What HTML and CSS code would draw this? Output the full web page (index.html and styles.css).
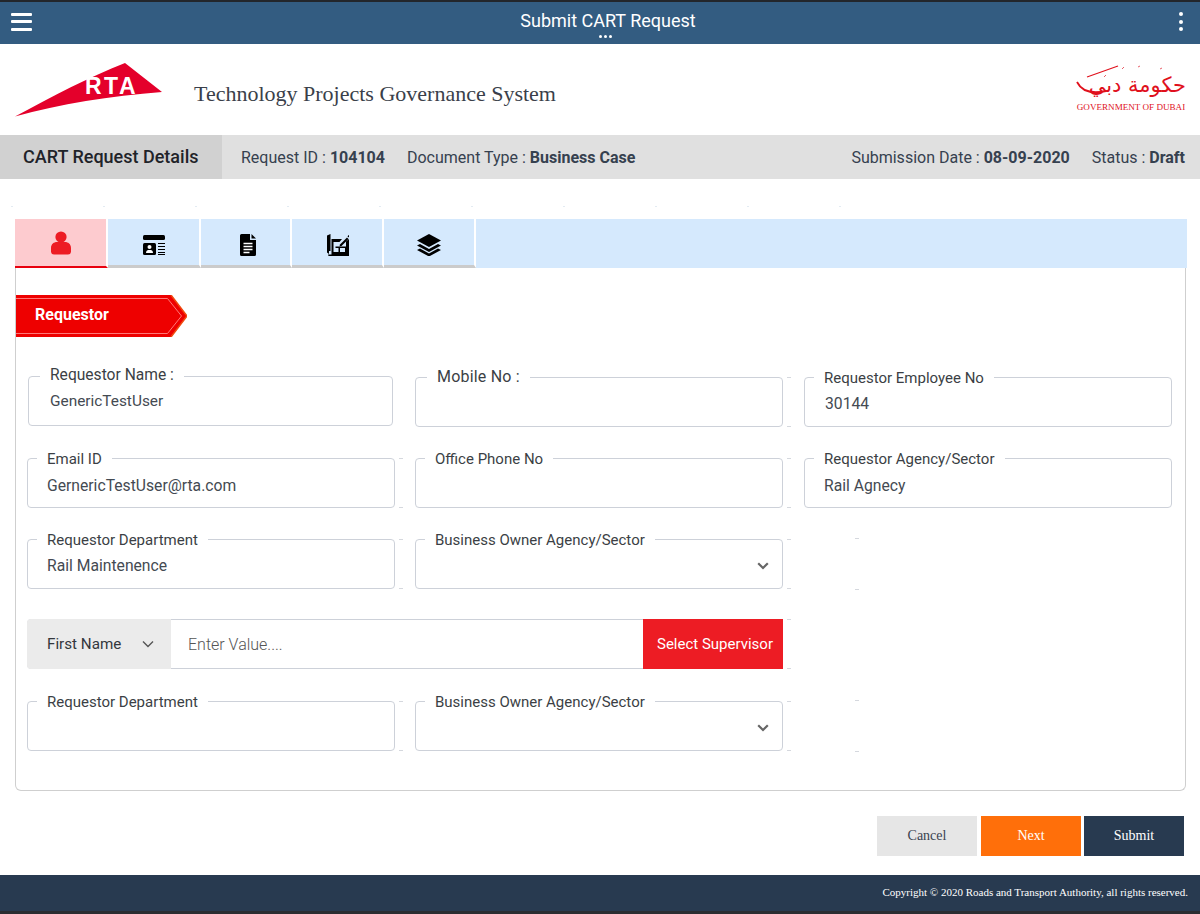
FILE: index.html
```html
<!DOCTYPE html>
<html lang="en">
<head>
<meta charset="utf-8">
<title>Submit CART Request</title>
<link rel="stylesheet" href="styles.css">
</head>
<body>
<header class="topbar">
  <button class="hamburger" aria-label="Menu"><span></span><span></span><span></span></button>
  <h1 class="page-title">Submit CART Request</h1>
  <div class="grip"><i></i><i></i><i></i></div>
  <button class="kebab" aria-label="More"><i></i><i></i><i></i></button>
</header>

<section class="brand">
  <div class="rta-logo">
    <svg viewBox="0 0 148 54" width="148" height="54" aria-hidden="true">
      <path d="M0 53.5C38 33 74 14 110 0L147 29C95 33 45 41 0 53.5Z" fill="#e4002b"/>
    </svg>
    <span class="rta-text">RTA</span>
  </div>
  <div class="system-name">Technology Projects Governance System</div>
  <div class="gov-logo">
    <svg class="gov-flourish" viewBox="0 0 110 36" width="110" height="36" aria-hidden="true">
      <path d="M1 17C6 27 16 29 30 26" fill="none" stroke="#e0101c" stroke-width="1.800"/>
      <path d="M11 12 42 1" fill="none" stroke="#e0101c" stroke-width="1.100"/>
      <path d="M28 12l2-2M46 4l2-2M62 2l2-1M84 4l2-1" fill="none" stroke="#e8606a" stroke-width="1"/>
    </svg>
    <div class="gov-arabic" lang="ar" dir="rtl">حكومة دبي</div>
    <div class="gov-latin">GOVERNMENT OF DUBAI</div>
  </div>
</section>

<section class="subbar">
  <div class="subbar-title">CART Request Details</div>
  <div class="meta-left">
    <span>Request ID : <b>104104</b></span>
    <span>Document Type : <b>Business Case</b></span>
  </div>
  <div class="meta-right">
    <span>Submission Date : <b>08-09-2020</b></span>
    <span>Status : <b>Draft</b></span>
  </div>
</section>

<div class="ticks"></div>

<main class="content">
  <nav class="tabs">
    <a class="tab tab-active">
      <svg viewBox="0 0 20 24" width="20" height="24" aria-hidden="true"><circle cx="10" cy="6" r="5.600" fill="#ed1c24"/><path d="M3 23.500a3 3 0 0 1-3-2.500v-4c0-4 3-6 6-6h8c3 0 6 2 6 6v4a3 3 0 0 1-3 2.500Z" fill="#ed1c24"/></svg>
    </a>
    <a class="tab">
      <svg viewBox="0 0 22 20" width="22" height="20" aria-hidden="true"><rect width="22" height="5" rx="1.500"/><rect y="8" width="13" height="12" rx="1.500"/><circle cx="6.500" cy="12" r="2" fill="#fff"/><path d="M3 18c0-2.500 1.500-3 3.500-3s3.500.5 3.500 3Z" fill="#fff"/><path d="M15 8.500h7M15 11.500h7M15 14.500h7M15 17.500h7M15 19.500h7" stroke="#000" stroke-width="1.100"/></svg>
    </a>
    <a class="tab tab-doc">
      <svg viewBox="0 0 16 22" width="16" height="22" aria-hidden="true"><path d="M1.500 0H10v5.500a.5.5 0 0 0 .5.5H16v14.500a1.500 1.500 0 0 1-1.500 1.500h-13A1.500 1.500 0 0 1 0 20.500v-19A1.500 1.500 0 0 1 1.500 0ZM11.500 0 16 4.500h-4.500Z"/><path d="M3.500 9.500h9M3.500 12.500h9M3.500 15.500h9M3.500 18.500h6" stroke="#fff" stroke-width="1.300"/></svg>
    </a>
    <a class="tab tab-plan">
      <svg viewBox="0 0 22 22" width="22" height="22" aria-hidden="true"><path d="M0 1.500 3.500 0v17H2v3L0 18.500Z"/><path d="M4.500 5H15l-2.500 3H6.500v10h5v-4H8.500v-1.500H19V7.500L22 5v17H1.500l-.5-1.500h3.500Zm8.500 9v4h5v-4Z"/><path d="M13 10.500 20 3.500l1.500 1.500-7 7-2 .5Z"/><path d="M20.500 2.500 21.500 1 23 2.500 22 3.500Z"/></svg>
    </a>
    <a class="tab tab-layers">
      <svg viewBox="0 0 24 22" width="24" height="22" aria-hidden="true"><path d="M12 0 24 6.500 12 13 0 6.500Z"/><path d="M3 10 12 15l9-5 3 1.500-12 6.500L0 11.500Z"/><path d="M3 14.500 12 19.500l9-5 3 1.500-12 6.500L0 16Z"/></svg>
    </a>
  </nav>

  <section class="panel">
    <div class="ribbon">
      <svg class="ribbon-shape" viewBox="0 0 171 42" width="171" height="42" aria-hidden="true">
        <path d="M0 0H155L171 21 155 42H0Z" fill="#ee0000"/>
        <path d="M0 3.500H151.500L165.500 21 151.500 38.500H0" fill="none" stroke="#f77" stroke-width="1"/>
        <path d="M155 0 171 21 155 42" fill="none" stroke="#f04a10" stroke-width="1.500"/>
      </svg>
      <span class="ribbon-text">Requestor</span>
    </div>

    <div class="form-grid">
      <div class="field field-first no-dash"><label class="label-first">Requestor Name :</label><span class="value value-first">GenericTestUser</span></div>
      <div class="field"><label class="label-mobile">Mobile No :</label></div>
      <div class="field no-dash"><label class="label-low">Requestor Employee No</label><span class="value value-low">30144</span></div>

      <div class="field"><label>Email ID</label><span class="value value-mid">GernericTestUser@rta.com</span></div>
      <div class="field"><label>Office Phone No</label></div>
      <div class="field no-dash"><label>Requestor Agency/Sector</label><span class="value value-mid">Rail Agnecy</span></div>

      <div class="field"><label>Requestor Department</label><span class="value">Rail Maintenence</span></div>
      <div class="field"><label>Business Owner Agency/Sector</label><svg class="chevron" viewBox="0 0 12 8" width="12" height="8" aria-hidden="true"><path d="M1.200 1.200 6 6l4.800-4.800" fill="none" stroke="#666" stroke-width="2.200"/></svg></div>
      <div class="empty"></div>

      <div class="search-row">
        <div class="search-select">First Name<svg viewBox="0 0 12 8" width="12" height="8" aria-hidden="true"><path d="M1 1.500 6 6.500l5-5" fill="none" stroke="#555" stroke-width="1.400"/></svg></div>
        <input class="search-input" type="text" placeholder="Enter Value....">
        <button class="search-btn">Select Supervisor</button>
      </div>
      <div class="empty no-dash"></div>

      <div class="field"><label>Requestor Department</label></div>
      <div class="field"><label>Business Owner Agency/Sector</label><svg class="chevron" viewBox="0 0 12 8" width="12" height="8" aria-hidden="true"><path d="M1.200 1.200 6 6l4.800-4.800" fill="none" stroke="#666" stroke-width="2.200"/></svg></div>
      <div class="empty"></div>
    </div>
  </section>

  <div class="actions">
    <button class="btn btn-cancel">Cancel</button>
    <button class="btn btn-next">Next</button>
    <button class="btn btn-submit">Submit</button>
  </div>
</main>

<footer class="footer">Copyright © 2020 Roads and Transport Authority, all rights reserved.</footer>
</body>
</html>
```
FILE: styles.css
```css
* { box-sizing: border-box; }
html, body { margin: 0; padding: 0; }
body {
  width: 1200px;
  height: 914px;
  overflow: hidden;
  background: #fff;
  font-family: Roboto, "Liberation Sans", sans-serif;
  color: #333;
}

/* top bar */
.topbar {
  position: relative;
  height: 44px;
  border-top: 2px solid #23262b;
  background: #335c81;
  display: flex;
  align-items: center;
  justify-content: space-between;
  padding: 0 17px 0 11px;
}
.hamburger, .kebab { border: 0; background: none; padding: 0; display: flex; flex-direction: column; }
.hamburger { width: 21px; gap: 4.500px; margin-top: -3px; }
.hamburger span { display: block; height: 3px; background: #fff; border-radius: 1px; }
.kebab { gap: 3.500px; margin-top: -3px; }
.kebab i { display: block; width: 4px; height: 4px; border-radius: 50%; background: #fff; }
.page-title {
  position: absolute;
  left: 16px; right: 0; top: 9px;
  margin: 0;
  text-align: center;
  font-size: 18px;
  line-height: 20px;
  font-weight: 400;
  color: #fff;
}
.grip { position: absolute; left: 599px; top: 33px; display: flex; gap: 2px; }
.grip i { display: block; width: 3px; height: 3px; border-radius: 50%; background: #fff; }

/* brand */
.brand {
  height: 91px;
  display: flex;
  align-items: center;
  padding: 0 14px 0 15px;
}
.rta-logo { position: relative; width: 148px; height: 54px; margin-top: 1px; }
.rta-logo svg { display: block; }
.rta-text {
  position: absolute;
  left: 70px; top: 10px;
  font: 700 23px/26px "Liberation Sans", sans-serif;
  letter-spacing: 2.500px;
  color: #fff;
}
.system-name {
  margin: 8px 0 0 31px;
  font: 22px/28px "Liberation Serif", serif;
  color: #3a3f4a;
  flex: 1;
}
.gov-logo {
  position: relative;
  width: 110px;
  height: 48px;
  margin-top: 2px;
  text-align: right;
  color: #e0101c;
}
.gov-flourish { position: absolute; left: 0; top: -2px; }
.gov-arabic {
  height: 36px;
  padding-top: 5px;
  font: 400 21px/26px "DejaVu Sans", sans-serif;
  white-space: nowrap;
}
.gov-latin {
  font: 9.100px/10px "Liberation Serif", serif;
  text-align: center;
  white-space: nowrap;
  margin-top: -1px;
}

/* sub bar */
.subbar {
  height: 44px;
  background: #e0e0e0;
  display: flex;
  align-items: center;
  font-size: 16px;
  color: #36414f;
}
.subbar b { font-weight: 700; }
.subbar-title {
  width: 222px;
  height: 100%;
  background: #d1d1d1;
  padding-left: 23px;
  font-size: 18px;
  line-height: 44px;
  font-weight: 500;
  color: #1f2329;
}
.meta-left { margin-left: 19px; display: flex; gap: 22px; flex: 1; }
.meta-right { display: flex; gap: 22px; padding-right: 15px; }

.ticks {
  height: 1px;
  margin: 27px 0 0 11px;
  background: repeating-linear-gradient(90deg, #e3ebf2 0 2px, transparent 2px 92px);
  width: 840px;
}

/* content */
.content { padding: 12px 13px 0 15px; }
.tabs {
  height: 49px;
  background: #d5e9fd;
  display: flex;
}
.tab {
  width: 93px;
  height: 49px;
  background: #d5e9fd;
  border-right: 2px solid #fff;
  border-bottom: 3px solid #cbcbcb;
  display: flex;
  align-items: center;
  justify-content: center;
  padding-top: 5px;
}
.tab-doc { width: 91px; padding-left: 5px; }
.tab-plan { width: 92px; padding-left: 1px; }
.tab-layers { width: 92px; }
.tab-active { background: #fdcbcf; border-bottom: 2px solid #e8000e; padding-top: 1px; }

.panel {
  height: 523px;
  margin-right: 1px;
  border: 1px solid #cfcfcf;
  border-top: 0;
  border-radius: 0 0 6px 6px;
  padding: 27px 0 0 0;
}
.ribbon { position: relative; width: 171px; height: 42px; }
.ribbon-shape { display: block; }
.ribbon-text {
  position: absolute;
  left: 19px; top: 10px;
  font-size: 16px;
  line-height: 20px;
  font-weight: 700;
  color: #fff;
}

/* form */
.form-grid {
  margin: 40px 0 0 11px;
  display: grid;
  grid-template-columns: 368px 369px 368px;
  grid-auto-rows: 50px;
  column-gap: 20px;
  row-gap: 31px;
}
.field {
  position: relative;
  width: 368px;
  border: 1px solid #cdd1d9;
  border-radius: 4px;
  display: flex;
  align-items: center;
  padding: 0 19px;
}
.field::after, .search-row::after, .empty::after {
  content: "";
  position: absolute;
  top: -1px; bottom: -1px;
  right: -9px;
  width: 4px;
  border-top: 1px solid #d5d8de;
  border-bottom: 1px solid #d5d8de;
}
.no-dash::after { display: none; }
.field-first { width: 365px; margin: -1px 0 1px 1px; padding-left: 21px; }
.field label {
  position: absolute;
  top: -8px; left: 9px;
  padding: 0 10px;
  background: #fff;
  font-size: 15px;
  line-height: 17px;
  color: #3b3f45;
  white-space: nowrap;
}
.field .label-first { left: 11px; font-size: 15.600px; top: -10px; }
.field .label-mobile { left: 11px; font-size: 16px; letter-spacing: .2px; top: -10px; }
.value { font-size: 15.700px; color: #444a52; padding-top: 3px; }
.value-first { font-size: 15.400px; padding-top: 0; }
.value-mid { padding-top: 4px; }
.value-low { padding-top: 2px; padding-left: 1px; }
.chevron { position: absolute; right: 13px; top: 22px; }
.empty { position: relative; }
.empty::after { right: auto; left: 51px; }

.search-row {
  position: relative;
  grid-column: 1 / span 2;
  margin: -1px 0 1px;
  width: 756px;
  display: flex;
  border: 1px solid #cdd1d9;
  border-radius: 4px;
}
.search-select {
  width: 144px;
  margin: -1px 0 -1px -1px;
  background: #ebebeb;
  border-radius: 4px 0 0 4px;
  display: flex;
  align-items: center;
  justify-content: space-between;
  padding: 0 17px 0 20px;
  font-size: 15.200px;
  color: #33373d;
}
.search-input {
  flex: 1;
  min-width: 0;
  border: 0;
  outline: 0;
  background: none;
  padding: 0 17px;
  font: 300 16px Roboto, sans-serif;
  color: #333;
}
.search-input::placeholder { color: #555; opacity: 1; }
.search-btn {
  width: 140px;
  margin: -1px -1px -1px 0;
  border: 0;
  background: #ed1c24;
  color: #fff;
  font: 400 15px Roboto, sans-serif;
  padding: 0 0 0 4px;
}

/* actions */
.actions {
  margin: 25px 3px 0 0;
  display: flex;
  justify-content: flex-end;
}
.btn {
  width: 100px;
  height: 40px;
  border: 0;
  padding: 0;
  font: 14px "Liberation Serif", serif;
}
.btn-cancel { background: #e6e6e6; color: #3a4350; margin-right: 4px; }
.btn-next { background: #ff6f0a; color: #fff; margin-right: 3px; }
.btn-submit { background: #283a50; color: #fff; }

/* footer */
.footer {
  margin-top: 19px;
  height: 39px;
  background: #283a50;
  border-bottom: 3px solid #2b2d31;
  padding: 0 12px 0 0;
  text-align: right;
  font: 11px/35px "Liberation Serif", serif;
  color: #fff;
}
```
